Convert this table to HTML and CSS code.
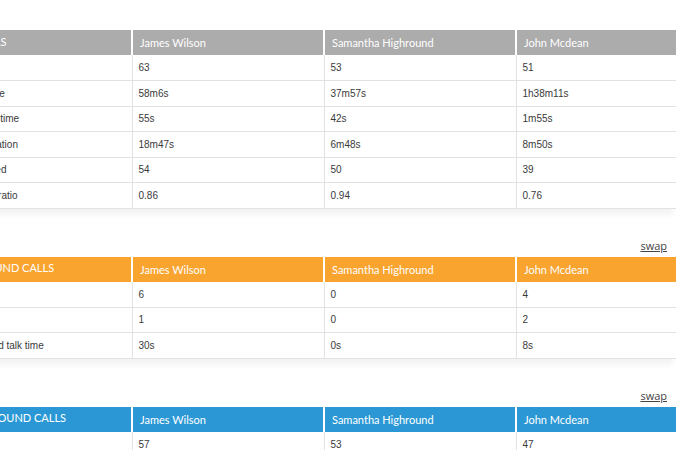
FILE: index.html
```html
<!DOCTYPE html>
<html>
<head>
<meta charset="utf-8">
<link rel="stylesheet" href="styles.css">
</head>
<body>
<div class="page">
  <section class="block first">
    <table class="stats gray">
      <colgroup><col class="c-label"><col class="c-agent"><col class="c-agent"><col class="c-last"></colgroup>
      <thead>
        <tr><th class="lead">TOTALS</th><th>James Wilson</th><th>Samantha Highround</th><th>John Mcdean</th></tr>
      </thead>
      <tbody>
        <tr><td>Calls</td><td>63</td><td>53</td><td>51</td></tr>
        <tr><td>Total time</td><td>58m6s</td><td>37m57s</td><td>1h38m11s</td></tr>
        <tr><td>Avg talk time</td><td>55s</td><td>42s</td><td>1m55s</td></tr>
        <tr><td>Avg duration</td><td>18m47s</td><td>6m48s</td><td>8m50s</td></tr>
        <tr><td>Answered</td><td>54</td><td>50</td><td>39</td></tr>
        <tr><td>Answer ratio</td><td>0.86</td><td>0.94</td><td>0.76</td></tr>
      </tbody>
    </table>
  </section>

  <section class="block">
    <div class="swap-row"><a class="swap" href="#">swap</a></div>
    <table class="stats orange">
      <colgroup><col class="c-label"><col class="c-agent"><col class="c-agent"><col class="c-last"></colgroup>
      <thead>
        <tr><th class="lead">INBOUND CALLS</th><th>James Wilson</th><th>Samantha Highround</th><th>John Mcdean</th></tr>
      </thead>
      <tbody>
        <tr><td>Calls</td><td>6</td><td>0</td><td>4</td></tr>
        <tr><td>Missed</td><td>1</td><td>0</td><td>2</td></tr>
        <tr><td>Accepted talk time</td><td>30s</td><td>0s</td><td>8s</td></tr>
      </tbody>
    </table>
  </section>

  <section class="block">
    <div class="swap-row"><a class="swap" href="#">swap</a></div>
    <table class="stats blue">
      <colgroup><col class="c-label"><col class="c-agent"><col class="c-agent"><col class="c-last"></colgroup>
      <thead>
        <tr><th class="lead">OUTBOUND CALLS</th><th>James Wilson</th><th>Samantha Highround</th><th>John Mcdean</th></tr>
      </thead>
      <tbody>
        <tr><td>Calls</td><td>57</td><td>53</td><td>47</td></tr>
        <tr><td>Connected</td><td>40</td><td>38</td><td>31</td></tr>
      </tbody>
    </table>
  </section>
</div>
</body>
</html>
```

FILE: styles.css
```css
html, body {
  margin: 0;
  padding: 0;
  background: #ffffff;
  overflow: hidden;
}

.page {
  padding-top: 30px;
  margin-left: -42px;
  width: 718px;
}

.block {
  margin-top: 32px;
}

.block.first {
  margin-top: 0;
}

.swap-row {
  display: flex;
  justify-content: flex-end;
  height: 16px;
  padding-right: 9px;
}

.swap {
  font-family: "Open Sans", "Liberation Sans", sans-serif;
  font-size: 11px;
  line-height: 10px;
  color: #444444;
  text-decoration: underline;
}

.stats {
  width: 718px;
  border-collapse: collapse;
  table-layout: fixed;
  box-shadow: 0 9px 6px -3px rgba(0, 0, 0, 0.05);
}

.c-label { width: 174px; }
.c-agent { width: 192px; }
.c-last { width: 160px; }

.stats th {
  height: 25px;
  padding: 0 0 0 7px;
  font-family: Lato, "Open Sans", sans-serif;
  font-weight: 400;
  font-size: 11px;
  color: #ffffff;
  text-align: left;
  white-space: nowrap;
  overflow: hidden;
  border-left: 2px solid rgba(255, 255, 255, 0.45);
  box-sizing: border-box;
}

.stats th.lead {
  border-left: 0;
  padding-bottom: 3px;
  padding-left: 9px;
}

.gray th { background: #acacac; }
.orange th { background: #f8a42e; }
.blue th { background: #2b98d5; }

.stats td {
  height: 25.5px;
  padding: 0 0 0 6px;
  font-family: "Liberation Sans", Arial, sans-serif;
  font-size: 10px;
  color: #3a3a3a;
  white-space: nowrap;
  overflow: hidden;
  border-bottom: 1px solid #e2e2e2;
  border-left: 1px solid #e2e2e2;
  box-sizing: border-box;
}

.stats td:first-child {
  border-left: 0;
  padding-left: 4px;
}
```
